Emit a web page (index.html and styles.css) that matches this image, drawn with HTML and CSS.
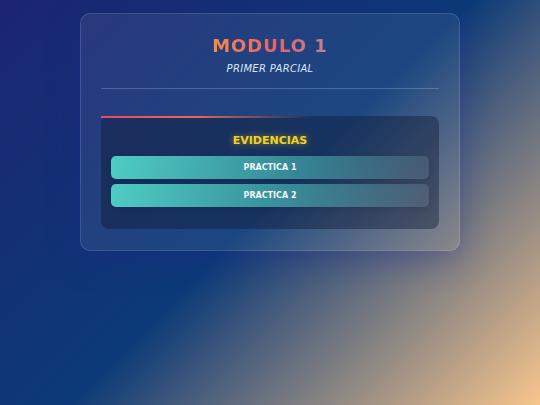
FILE: index.html
```html
<!DOCTYPE html>
<html lang="es">
<head>
<meta charset="utf-8">
<title>Modulo 1</title>
<link rel="stylesheet" href="styles.css">
</head>
<body>
<main class="card">
  <header class="card-header">
    <h1 class="title">MODULO 1</h1>
    <p class="subtitle">PRIMER PARCIAL</p>
  </header>
  <section class="panel">
    <h2 class="panel-title">EVIDENCIAS</h2>
    <div class="list">
      <a class="btn">PRACTICA 1</a>
      <a class="btn">PRACTICA 2</a>
    </div>
  </section>
</main>
</body>
</html>
```

FILE: styles.css
```css
html, body {
  margin: 0;
  height: 100%;
}
body {
  font-family: "DejaVu Sans", Verdana, sans-serif;
  background: linear-gradient(135deg, #1c2572 0%, #0c3a78 50%, #f7c58c 100%);
  padding-top: 13px;
  box-sizing: border-box;
}
.card {
  width: 380px;
  box-sizing: border-box;
  margin: 0 auto;
  padding: 21px 20px 21px;
  border-radius: 10px;
  background: rgba(255, 255, 255, 0.07);
  border: 1px solid rgba(255, 255, 255, 0.13);
  box-shadow: 0 8px 32px rgba(31, 38, 135, 0.37);
}
.card-header {
  text-align: center;
  padding-bottom: 13px;
  border-bottom: 1px solid rgba(255, 255, 255, 0.2);
  margin-bottom: 27px;
}
.title {
  display: inline-block;
  margin: 0;
  font-size: 18px;
  font-weight: bold;
  letter-spacing: 1px;
  line-height: 21px;
  background: linear-gradient(90deg, #f98a44 0%, #ea6268 55%, #bd8494 100%);
  -webkit-background-clip: text;
  background-clip: text;
  color: transparent;
}
.subtitle {
  margin: 7px 0 0;
  font-size: 10px;
  font-style: italic;
  letter-spacing: 0.3px;
  color: #dfe6f5;
  line-height: 12px;
}
.panel {
  position: relative;
  border-radius: 8px;
  background: rgba(14, 24, 50, 0.42);
  padding: 18px 10px 22px;
}
.panel::before {
  content: "";
  position: absolute;
  left: 0;
  top: 0;
  width: 62%;
  height: 2px;
  background: linear-gradient(90deg, #e84868 0%, #e86a5a 45%, rgba(232, 106, 90, 0) 100%);
}
.panel-title {
  margin: 0 0 9px;
  text-align: center;
  font-size: 11px;
  font-weight: bold;
  line-height: 13px;
  color: #f3d21c;
  text-shadow: 0 0 6px rgba(243, 210, 28, 0.55);
}
.list {
  display: flex;
  flex-direction: column;
  gap: 5px;
}
.btn {
  display: block;
  height: 23px;
  line-height: 23px;
  border-radius: 5px;
  text-align: center;
  font-size: 8px;
  font-weight: bold;
  color: #f2f6f8;
  background: linear-gradient(100deg, #4ecdc4 0%, rgba(78, 205, 196, 0.62) 50%, rgba(200, 220, 230, 0.12) 100%);
  box-shadow: 0 2px 6px rgba(0, 0, 0, 0.12);
  cursor: pointer;
}
```
